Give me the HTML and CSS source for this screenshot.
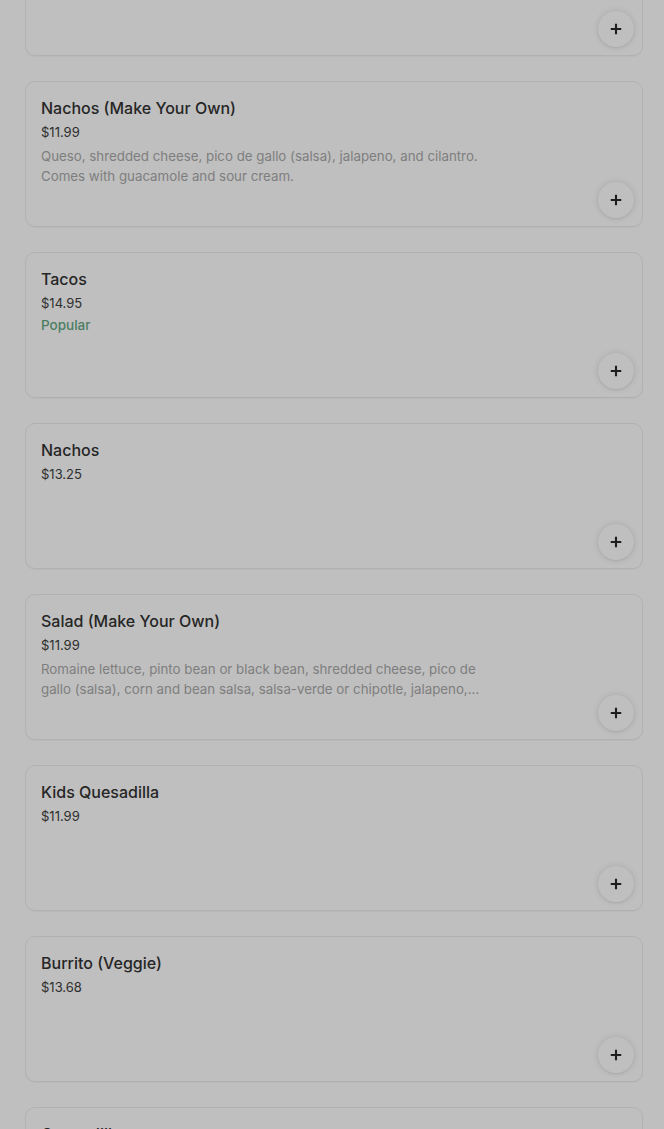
FILE: index.html
```html
<!DOCTYPE html>
<html lang="en">
<head>
<meta charset="utf-8">
<title>Menu</title>
<link rel="stylesheet" href="styles.css">
</head>
<body>
<div class="list">
  <div class="card">
    <div class="info">
      <div class="title">Burrito Bowl</div>
      <div class="price">$12.99</div>
    </div>
    <button class="add" aria-label="Add"><svg viewBox="0 0 16 16" width="14" height="14"><path d="M8 2v12M2 8h12" stroke="#1e1e1e" stroke-width="2.4" fill="none"/></svg></button>
  </div>
  <div class="card">
    <div class="info">
      <div class="title">Nachos (Make Your Own)</div>
      <div class="price">$11.99</div>
      <div class="desc">Queso, shredded cheese, pico de gallo (salsa), jalapeno, and cilantro. Comes with guacamole and sour cream.</div>
    </div>
    <button class="add" aria-label="Add"><svg viewBox="0 0 16 16" width="14" height="14"><path d="M8 2v12M2 8h12" stroke="#1e1e1e" stroke-width="2.4" fill="none"/></svg></button>
  </div>
  <div class="card">
    <div class="info">
      <div class="title">Tacos</div>
      <div class="price">$14.95</div>
      <div class="popular">Popular</div>
    </div>
    <button class="add" aria-label="Add"><svg viewBox="0 0 16 16" width="14" height="14"><path d="M8 2v12M2 8h12" stroke="#1e1e1e" stroke-width="2.4" fill="none"/></svg></button>
  </div>
  <div class="card">
    <div class="info">
      <div class="title">Nachos</div>
      <div class="price">$13.25</div>
    </div>
    <button class="add" aria-label="Add"><svg viewBox="0 0 16 16" width="14" height="14"><path d="M8 2v12M2 8h12" stroke="#1e1e1e" stroke-width="2.4" fill="none"/></svg></button>
  </div>
  <div class="card">
    <div class="info">
      <div class="title">Salad (Make Your Own)</div>
      <div class="price">$11.99</div>
      <div class="desc">Romaine lettuce, pinto bean or black bean, shredded cheese, pico de gallo (salsa), corn and bean salsa, salsa-verde or chipotle, jalapeno, cilantro, guacamole and sour cream.</div>
    </div>
    <button class="add" aria-label="Add"><svg viewBox="0 0 16 16" width="14" height="14"><path d="M8 2v12M2 8h12" stroke="#1e1e1e" stroke-width="2.4" fill="none"/></svg></button>
  </div>
  <div class="card">
    <div class="info">
      <div class="title">Kids Quesadilla</div>
      <div class="price">$11.99</div>
    </div>
    <button class="add" aria-label="Add"><svg viewBox="0 0 16 16" width="14" height="14"><path d="M8 2v12M2 8h12" stroke="#1e1e1e" stroke-width="2.4" fill="none"/></svg></button>
  </div>
  <div class="card">
    <div class="info">
      <div class="title">Burrito (Veggie)</div>
      <div class="price">$13.68</div>
    </div>
    <button class="add" aria-label="Add"><svg viewBox="0 0 16 16" width="14" height="14"><path d="M8 2v12M2 8h12" stroke="#1e1e1e" stroke-width="2.4" fill="none"/></svg></button>
  </div>
  <div class="card">
    <div class="info">
      <div class="title">Quesadilla</div>
      <div class="price">$12.50</div>
    </div>
    <button class="add" aria-label="Add"><svg viewBox="0 0 16 16" width="14" height="14"><path d="M8 2v12M2 8h12" stroke="#1e1e1e" stroke-width="2.4" fill="none"/></svg></button>
  </div>
</div>
</body>
</html>
```

FILE: styles.css
```css
html, body {
  margin: 0;
  padding: 0;
  background: #bfbfbf;
  height: 100%;
  overflow: hidden;
}
body {
  font-family: Inter, "Noto Sans", sans-serif;
  color: #222;
}
.list {
  display: flex;
  flex-direction: column;
  gap: 25px;
  padding: 0 21px 0 25px;
  margin-top: -90px;
}
.card {
  box-sizing: border-box;
  height: 146px;
  border: 1px solid #b1b1b1;
  border-radius: 10px;
  padding: 14px 8px 8px 15px;
  display: flex;
  justify-content: space-between;
  box-shadow: 0 1px 0 rgba(0,0,0,0.03);
}
.info {
  display: flex;
  flex-direction: column;
  min-width: 0;
}
.title {
  font-size: 16px;
  line-height: 24px;
  font-weight: 450;
  color: #262626;
  margin-bottom: 2px;
}
.price {
  font-size: 13px;
  line-height: 20px;
  color: #2e2e2e;
}
.desc {
  margin-top: 4px;
  font-size: 13.3px;
  line-height: 20px;
  color: #7e7e7e;
  max-width: 450px;
  display: -webkit-box;
  -webkit-line-clamp: 2;
  -webkit-box-orient: vertical;
  overflow: hidden;
}
.popular {
  margin-top: 2px;
  font-size: 13.5px;
  line-height: 20px;
  font-weight: 500;
  color: #4b7d63;
}
.add {
  align-self: flex-end;
  flex: none;
  width: 36px;
  height: 36px;
  border-radius: 50%;
  border: none;
  background: #bfbfbf;
  box-shadow: 0 0 6px rgba(0,0,0,0.12), 0 1px 2px rgba(0,0,0,0.06);
  display: flex;
  align-items: center;
  justify-content: center;
  padding: 0;
}
```
